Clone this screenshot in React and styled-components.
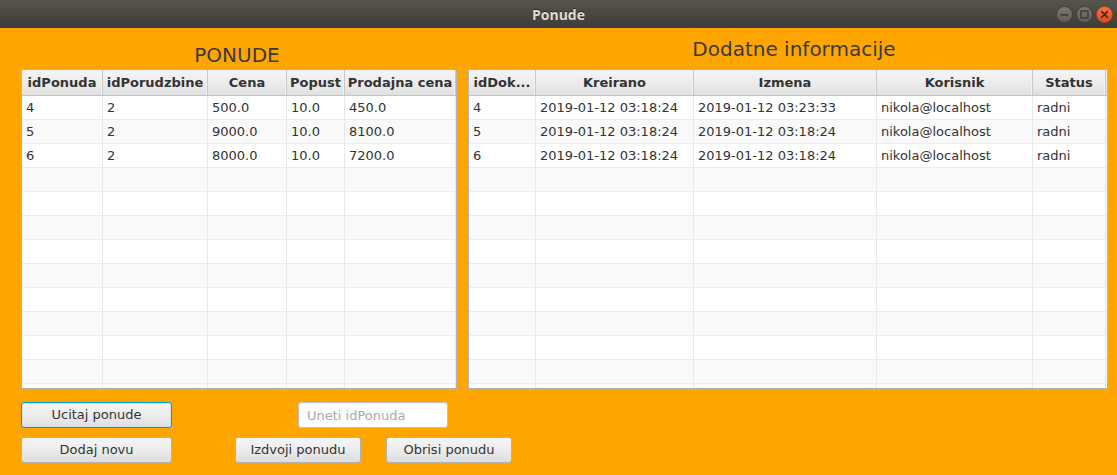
import React from "react";
import styled, { createGlobalStyle } from "styled-components";

const GlobalStyle = createGlobalStyle`
  html, body { margin: 0; padding: 0; }
  body {
    width: 1117px;
    height: 475px;
    overflow: hidden;
    background: #ffa500;
    font-family: "DejaVu Sans", "Liberation Sans", sans-serif;
    color: #333333;
  }
  * { box-sizing: border-box; }
`;

const Window = styled.div`
  width: 1117px;
  height: 475px;
  display: flex;
  flex-direction: column;
  background: #ffa500;
`;

const TitleBar = styled.div`
  height: 28px;
  flex: 0 0 28px;
  display: grid;
  grid-template-columns: 1fr auto 1fr;
  align-items: center;
  background: linear-gradient(to bottom, #57534d 0%, #4a4741 55%, #3d3c38 100%);
`;

const TitleText = styled.div`
  font-family: "Open Sans", "DejaVu Sans", sans-serif;
  font-weight: 700;
  font-size: 14px;
  color: #dfdbd2;
  text-shadow: 0 -1px 0 #2a2926;
  padding-top: 1px;
`;

const Controls = styled.div`
  justify-self: end;
  display: flex;
  gap: 3px;
  padding-right: 4px;
  padding-top: 1px;
`;

const CtrlIcon = ({ kind }) => {
  const isClose = kind === "close";
  const id = `g-${kind}`;
  return (
    <svg width="17" height="17" viewBox="0 0 17 17">
      <defs>
        <linearGradient id={id} x1="0" y1="0" x2="0" y2="1">
          {isClose ? (
            <>
              <stop offset="0" stopColor="#f07746" />
              <stop offset="1" stopColor="#df4a16" />
            </>
          ) : (
            <>
              <stop offset="0" stopColor="#7c7973" />
              <stop offset="1" stopColor="#5f5c56" />
            </>
          )}
        </linearGradient>
      </defs>
      <circle cx="8.5" cy="8.5" r="8" fill={`url(#${id})`} stroke={isClose ? "#b23b10" : "#3a3935"} strokeWidth="0.8" />
      {kind === "min" && <rect x="4.5" y="8" width="8" height="1.6" fill="#3c3b37" />}
      {kind === "max" && <rect x="5" y="5" width="7" height="7" fill="none" stroke="#3c3b37" strokeWidth="1.4" />}
      {isClose && (
        <path d="M5.6 5.6 L11.4 11.4 M11.4 5.6 L5.6 11.4" stroke="#3c2a22" strokeWidth="1.5" strokeLinecap="round" />
      )}
    </svg>
  );
};

const Content = styled.div`
  flex: 1;
  display: flex;
  flex-direction: column;
  padding-left: 21px;
`;

const Panels = styled.div`
  display: flex;
  gap: 11px;
`;

const Panel = styled.div`
  width: ${(p) => p.$w}px;
  display: flex;
  flex-direction: column;
`;

const PanelTitle = styled.div`
  height: 41px;
  padding-top: ${(p) => p.$top}px;
  padding-left: ${(p) => p.$shift > 0 ? p.$shift : 0}px;
  padding-right: ${(p) => p.$shift < 0 ? -p.$shift : 0}px;
  font-size: 20px;
  line-height: 24px;
  text-align: center;
  color: #3a3a3a;
`;

const TableBox = styled.div`
  height: 320px;
  border: 1px solid #b5b5b5;
  background: #ffffff;
  overflow: hidden;
  display: flex;
  flex-direction: column;
`;

const HeaderRow = styled.div`
  display: grid;
  grid-template-columns: ${(p) => p.$cols};
  height: 26px;
  flex: 0 0 26px;
  background: linear-gradient(to bottom, #f5f5f5 0%, #ececec 50%, #e0e0e0 100%);
  border-bottom: 1px solid #c4c4c4;
`;

const HeadCell = styled.div`
  border-right: ${(p) => (p.$filler ? "none" : "1px solid #c8c8c8")};
  box-shadow: ${(p) => (p.$filler ? "none" : "inset -1px 0 0 #f3f3f3")};
  font-weight: 700;
  font-size: 13px;
  line-height: 25px;
  text-align: center;
  white-space: nowrap;
  overflow: hidden;
  color: #333333;
`;

const Body = styled.div`
  flex: 1;
  overflow: hidden;
`;

const Row = styled.div`
  display: grid;
  grid-template-columns: ${(p) => p.$cols};
  height: 24px;
  background: ${(p) => (p.$odd ? "#f9f9f9" : "#ffffff")};
  border-bottom: 1px solid #ececec;
`;

const Cell = styled.div`
  border-right: ${(p) => (p.$filler ? "none" : "1px solid #e8e8e8")};
  padding: 0 4px;
  font-size: 13px;
  line-height: 23px;
  white-space: nowrap;
  overflow: hidden;
  color: #333333;
`;

const Actions = styled.div`
  padding-top: 13px;
  display: flex;
  flex-direction: column;
  gap: 9px;
`;

const ActionRow = styled.div`
  display: flex;
  align-items: center;
`;

const Button = styled.button`
  width: ${(p) => p.$w}px;
  height: 26px;
  margin-left: ${(p) => p.$ml || 0}px;
  padding: 0;
  border: 1px solid ${(p) => (p.$focused ? "#039ed3" : "#b3b3b3")};
  border-radius: 3px;
  background: linear-gradient(to bottom, #f6f6f6 0%, #ececec 50%, #dedede 100%);
  box-shadow: ${(p) =>
    p.$focused
      ? "inset 0 0 0 1px #c8e6f2, inset 0 1px 0 #ffffff"
      : "inset 0 1px 0 #fbfbfb"};
  font-family: "DejaVu Sans", "Liberation Sans", sans-serif;
  font-size: 13px;
  color: #333333;
  line-height: 24px;
  text-align: center;
`;

const TextField = styled.input`
  width: 150px;
  height: 26px;
  margin-left: ${(p) => p.$ml || 0}px;
  border: 1px solid #c2c2c2;
  border-radius: 3px;
  background: #ffffff;
  box-shadow: inset 0 1px 1px rgba(0, 0, 0, 0.06);
  padding: 0 8px;
  font-family: "DejaVu Sans", "Liberation Sans", sans-serif;
  font-size: 13px;
  color: #333333;
  outline: none;
  &::placeholder { color: #aaaaaa; }
`;

const leftCols = "81px 105px 79px 58px 111px";
const rightCols = "67px 158px 183px 156px 73px 1fr";

const leftHeaders = ["idPonuda", "idPorudzbine", "Cena", "Popust", "Prodajna cena"];
const leftData = [
  ["4", "2", "500.0", "10.0", "450.0"],
  ["5", "2", "9000.0", "10.0", "8100.0"],
  ["6", "2", "8000.0", "10.0", "7200.0"],
];

const rightHeaders = ["idDok...", "Kreirano", "Izmena", "Korisnik", "Status"];
const rightData = [
  ["4", "2019-01-12 03:18:24", "2019-01-12 03:23:33", "nikola@localhost", "radni"],
  ["5", "2019-01-12 03:18:24", "2019-01-12 03:18:24", "nikola@localhost", "radni"],
  ["6", "2019-01-12 03:18:24", "2019-01-12 03:18:24", "nikola@localhost", "radni"],
];

const TOTAL_ROWS = 13;

const DataTable = ({ cols, headers, data, filler }) => {
  const rows = [];
  for (let i = 0; i < TOTAL_ROWS; i++) {
    const r = data[i] || headers.map(() => "");
    rows.push(
      <Row key={i} $cols={cols} $odd={i % 2 === 1}>
        {r.map((v, j) => (
          <Cell key={j}>{v}</Cell>
        ))}
        {filler && <Cell $filler />}
      </Row>
    );
  }
  return (
    <TableBox>
      <HeaderRow $cols={cols}>
        {headers.map((h) => (
          <HeadCell key={h}>{h}</HeadCell>
        ))}
        {filler && <HeadCell $filler />}
      </HeaderRow>
      <Body>{rows}</Body>
    </TableBox>
  );
};

export default function App() {
  return (
    <>
      <GlobalStyle />
      <Window>
        <TitleBar>
          <span />
          <TitleText>Ponude</TitleText>
          <Controls>
            <CtrlIcon kind="min" />
            <CtrlIcon kind="max" />
            <CtrlIcon kind="close" />
          </Controls>
        </TitleBar>
        <Content>
          <Panels>
            <Panel $w={436}>
              <PanelTitle $top={15} $shift={-4}>PONUDE</PanelTitle>
              <DataTable cols={leftCols} headers={leftHeaders} data={leftData} />
            </Panel>
            <Panel $w={640}>
              <PanelTitle $top={9} $shift={12}>Dodatne informacije</PanelTitle>
              <DataTable cols={rightCols} headers={rightHeaders} data={rightData} filler />
            </Panel>
          </Panels>
          <Actions>
            <ActionRow>
              <Button $w={151} $focused>Ucitaj ponude</Button>
              <TextField $ml={126} placeholder="Uneti idPonuda" />
            </ActionRow>
            <ActionRow>
              <Button $w={151}>Dodaj novu</Button>
              <Button $w={126} $ml={63}>Izdvoji ponudu</Button>
              <Button $w={126} $ml={25}>Obrisi ponudu</Button>
            </ActionRow>
          </Actions>
        </Content>
      </Window>
    </>
  );
}
